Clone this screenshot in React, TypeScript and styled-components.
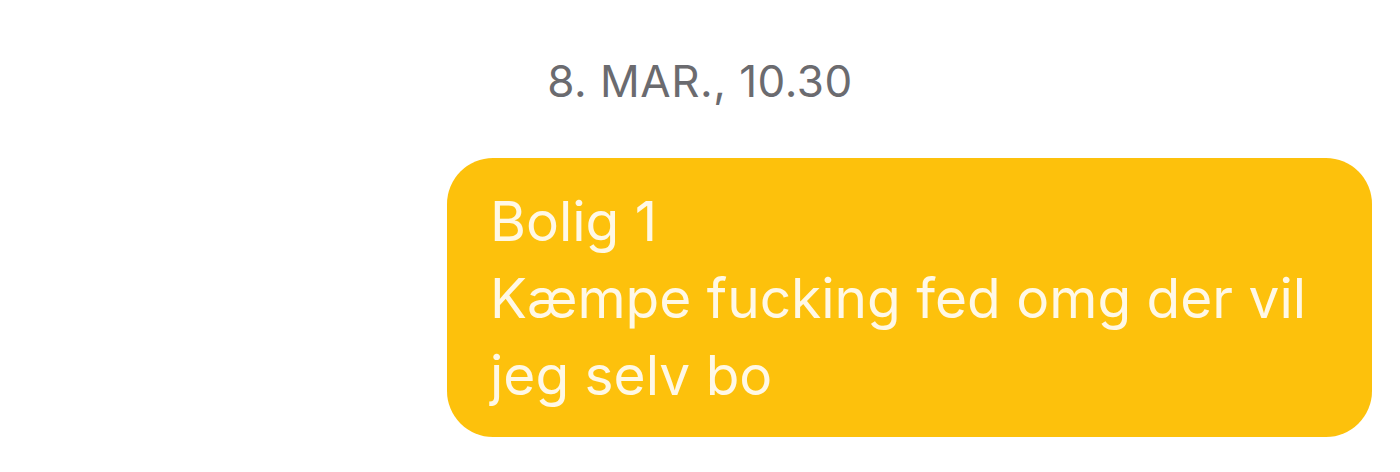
import React from 'react';
import styled, { createGlobalStyle } from 'styled-components';

const GlobalStyle = createGlobalStyle`
  body {
    margin: 0;
    background: #ffffff;
    font-family: Inter, "Liberation Sans", sans-serif;
  }
`;

const Thread = styled.div`
  height: 472px;
  display: flex;
  flex-direction: column;
  padding: 56px 28px 0 0;
  box-sizing: border-box;
  overflow: hidden;
`;

const Stamp = styled.div`
  align-self: center;
  margin-left: 28px;
  font-size: 44px;
  color: #6b6b6f;
  letter-spacing: 0.5px;
  line-height: 50px;
`;

const Bubble = styled.div`
  align-self: flex-end;
  width: 925px;
  height: 279px;
  box-sizing: border-box;
  margin-top: 52px;
  padding: 25px 30px 0 43px;
  background: #fdc10c;
  border-radius: 46px;
  color: #fff8e6;
  font-size: 55px;
  line-height: 77px;
`;

const App = () => {
  return (
    <>
      <GlobalStyle />
      <Thread>
        <Stamp>8. MAR., 10.30</Stamp>
        <Bubble>
          Bolig 1
          <br />
          Kæmpe fucking fed omg der vil jeg selv bo
        </Bubble>
      </Thread>
    </>
  );
};

export default App;
